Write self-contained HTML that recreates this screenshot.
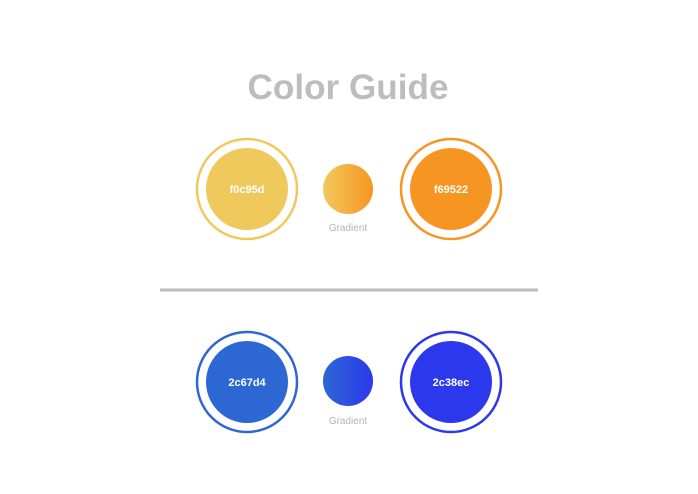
<!DOCTYPE html>
<html><head><style>
html,body{margin:0;padding:0;background:#fff;width:698px;height:494px;overflow:hidden}
svg{display:block}
</style></head><body>
<svg width="698" height="494" viewBox="0 0 698 494" xmlns="http://www.w3.org/2000/svg" font-family="Liberation Sans, sans-serif">
<defs>
<linearGradient id="g1" x1="0" x2="1" y1="0" y2="0"><stop offset="0" stop-color="#f0c95d"/><stop offset="1" stop-color="#f69522"/></linearGradient>
<linearGradient id="g2" x1="0" x2="1" y1="0" y2="0"><stop offset="0" stop-color="#2c67d4"/><stop offset="1" stop-color="#2c38ec"/></linearGradient>
</defs>
<text x="348" y="99" text-anchor="middle" font-size="35" font-weight="bold" fill="#bdbdbd" textLength="201" lengthAdjust="spacingAndGlyphs">Color Guide</text>
<circle cx="247" cy="189" r="50" fill="none" stroke="#f0c95d" stroke-width="2.5"/>
<circle cx="247" cy="189" r="41" fill="#f0c95d"/>
<text x="247" y="193" text-anchor="middle" font-size="11" font-weight="bold" fill="#fff">f0c95d</text>
<circle cx="348" cy="189" r="25" fill="url(#g1)"/>
<text x="348" y="231" text-anchor="middle" font-size="10" fill="#b5b5b5">Gradient</text>
<circle cx="451" cy="189" r="50" fill="none" stroke="#f69522" stroke-width="2.5"/>
<circle cx="451" cy="189" r="41" fill="#f69522"/>
<text x="451" y="193" text-anchor="middle" font-size="11" font-weight="bold" fill="#fff">f69522</text>
<rect x="160" y="288.5" width="378" height="3" fill="#bbbbbb"/>
<circle cx="247" cy="382" r="50" fill="none" stroke="#2c67d4" stroke-width="2.5"/>
<circle cx="247" cy="382" r="41" fill="#2c67d4"/>
<text x="247" y="386" text-anchor="middle" font-size="11" font-weight="bold" fill="#fff">2c67d4</text>
<circle cx="348" cy="381" r="25" fill="url(#g2)"/>
<text x="348" y="424" text-anchor="middle" font-size="10" fill="#b5b5b5">Gradient</text>
<circle cx="451" cy="382" r="50" fill="none" stroke="#2c38ec" stroke-width="2.5"/>
<circle cx="451" cy="382" r="41" fill="#2c38ec"/>
<text x="451" y="386" text-anchor="middle" font-size="11" font-weight="bold" fill="#fff">2c38ec</text>
</svg>
</body></html>
